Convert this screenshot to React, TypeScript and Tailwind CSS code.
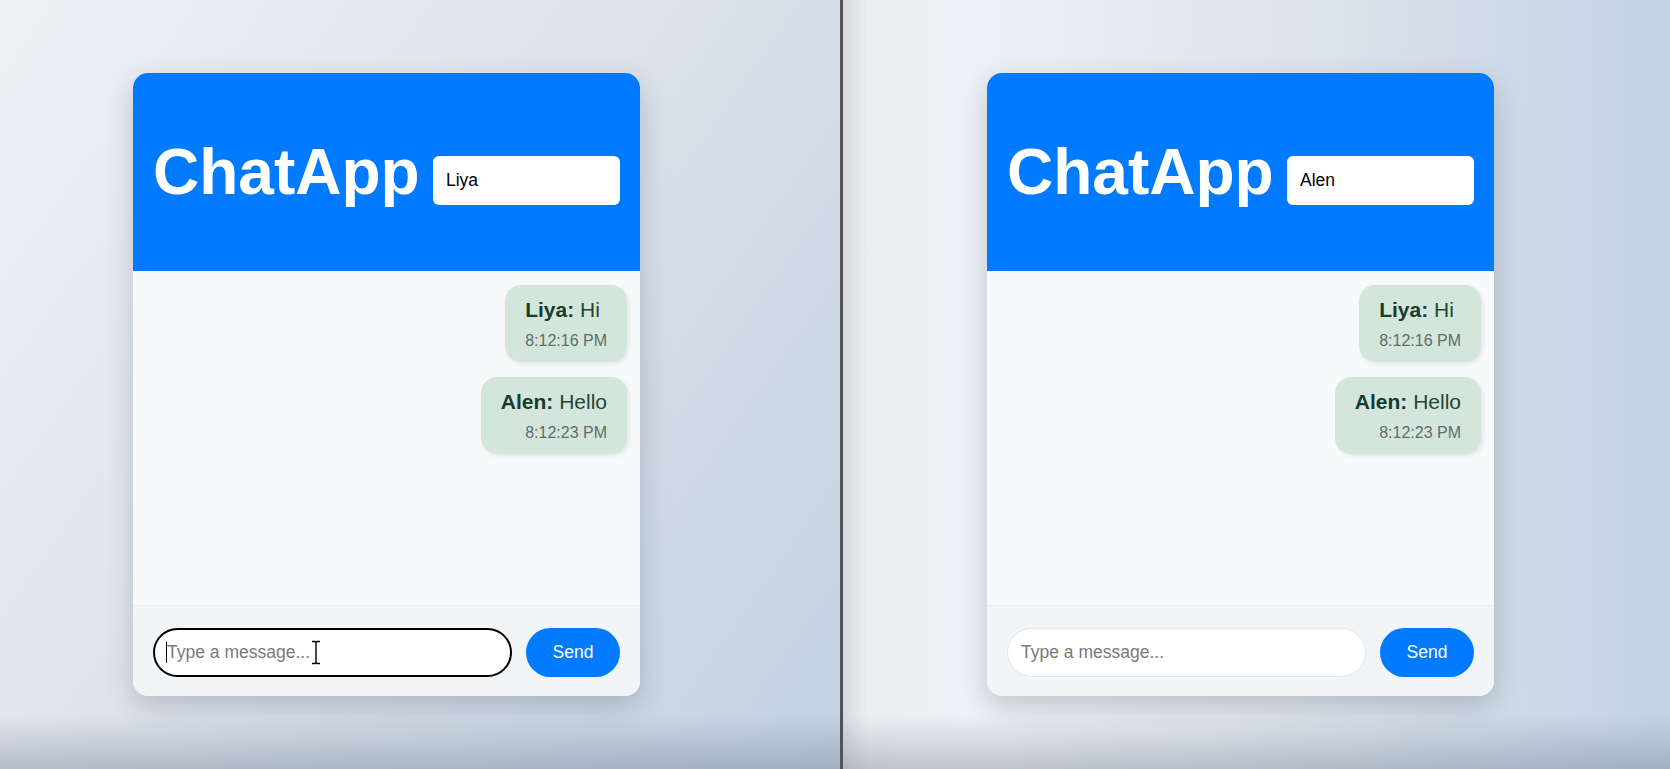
import React from 'react';

type Msg = { name: string; text: string; time: string };

const messages: Msg[] = [
  { name: 'Liya', text: 'Hi', time: '8:12:16 PM' },
  { name: 'Alen', text: 'Hello', time: '8:12:23 PM' },
];

const ChatCard: React.FC<{ user: string; focused?: boolean }> = ({ user, focused }) => {
  return (
    <div className="w-[507px] h-[623px] rounded-[15px] overflow-hidden flex flex-col bg-[#f8f9fa] shadow-[0_10px_28px_rgba(40,50,70,0.22)]">
      {/* Header */}
      <div className="h-[198px] shrink-0 bg-[#007bff] flex items-center justify-between px-5">
        <h1 className="text-[64px] font-bold text-white leading-none">ChatApp</h1>
        <input
          readOnly
          value={user}
          className="mt-4 w-[187px] h-[49px] rounded-md bg-white px-[13px] text-[17.5px] text-black outline-none"
        />
      </div>

      {/* Messages */}
      <div className="flex-1 flex flex-col items-end gap-[15px] pt-[14px] pr-[13px]">
        {messages.map((m) => (
          <div
            key={m.time}
            className="rounded-2xl bg-[#d3e6dc] px-5 pt-3 pb-3 shadow-[2px_2px_4px_rgba(0,0,0,0.08)]"
          >
            <div className="text-[21px] leading-[25px] text-[#1f4636]">
              <span className="font-bold text-[#173b2c]">{m.name}:</span> {m.text}
            </div>
            <div className="mt-[10px] text-right text-[16px] leading-[18px] text-[#5f6d67]">{m.time}</div>
          </div>
        ))}
      </div>

      {/* Composer */}
      <div className="h-[91px] shrink-0 border-t border-[#e8ecf0] bg-[#f2f5f8] flex items-start gap-[14px] px-5 pt-[22px]">
        <div className="relative flex-1">
          <input
            readOnly
            placeholder="Type a message..."
            className={
              focused
                ? 'w-full h-[49px] rounded-full border-2 border-black bg-white px-[12px] text-[17.5px] placeholder:text-[#7a7a7a] outline-none'
                : 'w-full h-[49px] rounded-full border border-[#e1e4e8] bg-white px-[13px] text-[17.5px] placeholder:text-[#7a7a7a] outline-none'
            }
          />
          {focused && (
            <>
              <span className="absolute left-[13px] top-[14px] h-[21px] w-px bg-black" />
              <svg
                className="absolute left-[157px] top-[12px]"
                width="12"
                height="25"
                viewBox="0 0 12 25"
              >
                <path
                  d="M2 1.5h3l1 1 1-1h3M6 2.5v20M2 23.5h3l1-1 1 1h3"
                  fill="none"
                  stroke="white"
                  strokeWidth="3"
                />
                <path
                  d="M2 1.5h3l1 1 1-1h3M6 2.5v20M2 23.5h3l1-1 1 1h3"
                  fill="none"
                  stroke="black"
                  strokeWidth="1.4"
                />
              </svg>
            </>
          )}
        </div>
        <button className="w-[94px] h-[49px] rounded-full bg-[#007bff] text-white text-[17.5px]">Send</button>
      </div>
    </div>
  );
};

export default function App() {
  return (
    <div
      className="w-full h-[769px] flex overflow-hidden"
      style={{ fontFamily: '"Liberation Sans", Arial, sans-serif' }}
    >
      <div className="w-[840px] shrink-0 pl-[133px] pt-[73px] bg-[linear-gradient(to_bottom,rgba(0,0,0,0)_93%,rgba(90,105,125,0.32)_100%),linear-gradient(125deg,#eef1f4_0%,#e2e7ee_35%,#d3dce7_65%,#c3d1e1_100%)]">
        <ChatCard user="Liya" focused />
      </div>
      <div className="w-[3px] shrink-0 bg-[#4f545b]" />
      <div className="flex-1 pl-[144px] pt-[73px] bg-[linear-gradient(to_bottom,rgba(0,0,0,0)_93%,rgba(90,105,125,0.32)_100%),linear-gradient(90deg,#d7dadd_0%,#eceef1_3%,#eef1f5_15%,#dde4ec_55%,#c4d2e3_100%)]">
        <ChatCard user="Alen" />
      </div>
    </div>
  );
}
